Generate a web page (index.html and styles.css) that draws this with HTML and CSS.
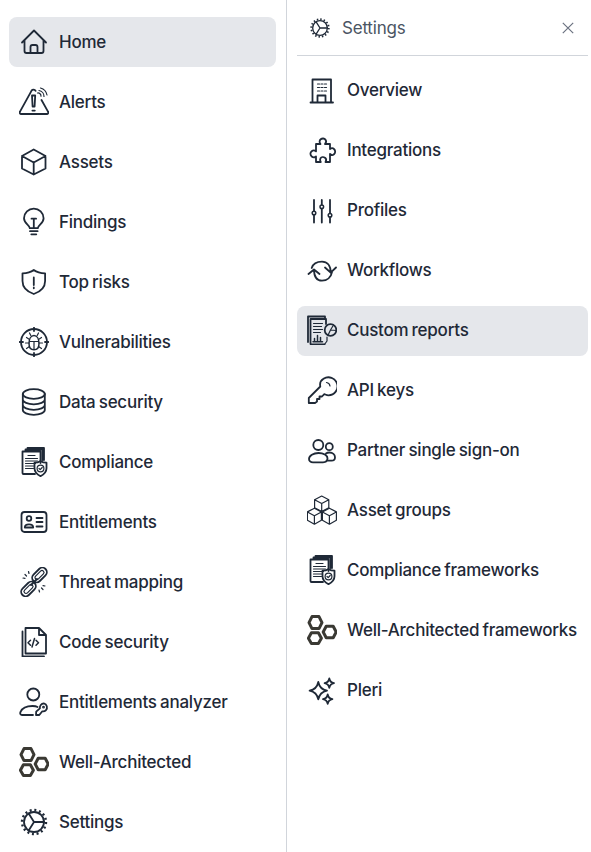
FILE: index.html
```html
<!DOCTYPE html>
<html lang="en">
<head>
<meta charset="utf-8">
<title>Navigation</title>
<link rel="stylesheet" href="styles.css">
</head>
<body>
<svg class="defs" width="0" height="0" aria-hidden="true">
  <defs>
    <symbol id="i-home" viewBox="0 0 30 30"><path d="M3 15.500 15 3.500l12 12M5.500 13.500V24a2 2 0 0 0 2 2h15a2 2 0 0 0 2-2V13.500M11.500 26v-6a2 2 0 0 1 2-2h3a2 2 0 0 1 2 2v6"/></symbol>
    <symbol id="i-alerts" viewBox="0 0 30 30"><path d="M12.600 3.600 1 24.600a1.500 1.500 0 0 0 1.300 2.400h25.400a1.500 1.500 0 0 0 1.300-2.400L22.500 13M16.600 3.800a2.300 2.300 0 0 0-4-.2M13 8.500h3.200l-.6 11h-2zM13.400 23.600h2.400"/><path class="thin" d="M20 3.500a6 6 0 0 1 5 6M21.500 1a9 9 0 0 1 6.500 7M18.500 6a3 3 0 0 1 3.500 3.200"/></symbol>
    <symbol id="i-assets" viewBox="0 0 30 30"><path d="M14.700 2.500 26.500 9v12.500l-11.800 6-11.700-6V9zM3 9l11.700 6.500L26.500 9M14.700 15.500v12"/></symbol>
    <symbol id="i-findings" viewBox="0 0 30 30"><path d="M10.800 21.200c0-3.200-5.800-4.500-5.800-10A9.800 9.800 0 0 1 14.800 1.600 9.800 9.800 0 0 1 24.600 11.200c0 5.500-5.800 6.800-5.800 10zM10.800 21.200h8M11 24.200h7.600M12.300 27.300h5M12.500 11.700h4.600M14.800 11.700v9.500"/></symbol>
    <symbol id="i-shield" viewBox="0 0 30 30"><path d="M14.800 3C11.500 5.600 8 6.300 3.500 6.300V14c0 6.500 4.500 10.700 11.300 13 6.800-2.300 11.300-6.500 11.300-13V6.300C21.600 6.300 18.100 5.600 14.800 3zM14.800 10.500v7.500M14.800 20.500v.8"/></symbol>
    <symbol id="i-vuln" viewBox="0 0 30 30"><circle cx="15" cy="15" r="13"/><path d="M15 .5v3.500M15 26v3.500M.5 15H4M26 15h3.500"/><path class="thin" d="M10.500 14.500h9M15 14.500v8M11.800 8.500 10.500 6M18.200 8.500 19.500 6M10.500 12.500 7.500 10.500M19.500 12.500l3-2M10 16H6.500M20 16h3.500M10.500 19.500l-3 2M19.500 19.500l3 2"/><path class="mid" d="M15 22.800c-3.200 0-5-2.600-5-6.300 0-4.500 2-8 5-8s5 3.500 5 8c0 3.700-1.800 6.300-5 6.300z"/></symbol>
    <symbol id="i-db" viewBox="0 0 30 30"><ellipse cx="14.800" cy="7" rx="11" ry="4.800"/><path d="M3.800 7v16c0 2.700 5 4.800 11 4.800s11-2.100 11-4.800V7M3.800 12.500c0 2.700 5 4.800 11 4.800s11-2.100 11-4.800M3.800 18c0 2.700 5 4.800 11 4.800s11-2.100 11-4.800"/></symbol>
    <symbol id="i-comp" viewBox="0 0 30 30"><path d="M16 27H4.500a1 1 0 0 1-1-1V4.500h18V16M6.500 4.500V2.500h17V13M8.500 2.500V1h16.500v12"/><path class="thin" d="M9 8.500h7M6.500 11.500h12M6.500 14h12M6.500 16.500h10M6.500 19h8M6.500 21.500h8"/><path d="M21.500 14c1.800 1.300 3.400 1.700 6 1.700v5.500c0 3.500-2.300 6-6 8-3.700-2-6-4.500-6-8v-5.500c2.600 0 4.200-.4 6-1.700z"/><circle class="thin" cx="21.500" cy="21.500" r="3.400"/><path class="thin" d="m20 21.500 1.200 1.200 2-2.200"/></symbol>
    <symbol id="i-id" viewBox="0 0 30 30"><rect x="2.500" y="5" width="25" height="20" rx="3"/><circle cx="10" cy="11.500" r="2.300"/><path d="M5.800 20.500c0-2 1.800-3.200 4.200-3.200s4.200 1.200 4.200 3.200zM17.500 11h6M17.500 15h6M17.500 19.500h6"/></symbol>
    <symbol id="i-chain" viewBox="0 0 30 30"><rect x="12" y="3.500" width="17" height="9" rx="4.500" transform="rotate(-45 20.500 8)"/><rect x="1" y="17.500" width="17" height="9" rx="4.500" transform="rotate(-45 9.500 22)"/><rect class="thin" x="15" y="6" width="11" height="4" rx="2" transform="rotate(-45 20.500 8)"/><rect class="thin" x="4" y="20" width="11" height="4" rx="2" transform="rotate(-45 9.500 22)"/><path d="M12 18l6-6"/><path class="thin" d="M6 7.500 7.500 9M9.500 4.500l.5 2M4 11l2 .4M24 22.500 22.500 21M20.500 25l-.5-2M26 19l-2-.4"/></symbol>
    <symbol id="i-code" viewBox="0 0 30 30"><path d="M6.500 1h13.500l7 7v18.500h-20.500zM20 1v7h7M3.500 4.500V29.500H25"/><path class="mid" d="M15.500 11.500 13 20M11.500 13.200 9 15.700l2.500 2.500M17 13.200l2.500 2.500-2.500 2.500"/></symbol>
    <symbol id="i-ekey" viewBox="0 0 30 30"><circle cx="14.300" cy="7.500" r="6"/><path d="M14 28H3c-1.500 0-2.200-1.500-1.500-3 1.500-3.500 6-6 12-6 2 0 4 .4 5 1"/><path d="M24.800 16.300a4.200 4.200 0 0 1 2 7c-1 1-2.300 1.200-3.500 1l-3 3.700h-3.300l.2-3.300 3.700-3.400a4.300 4.300 0 0 1 3.900-5z"/><circle class="thin" cx="24.500" cy="20.200" r=".8"/></symbol>
    <symbol id="i-hex" viewBox="0 0 30 30"><g class="hexes"><path d="M5 1.600h7l3 6-3 6H5l-3-6z"/><path d="M19.200 11.300h7l3 5.700-3 5.700h-7l-3-5.700z"/><path d="M4.400 17.800h7l3 5.500-3 5.200h-7l-3-5.200z"/></g></symbol>
    <symbol id="i-gear" viewBox="0 0 30 30"><circle cx="15" cy="15" r="10"/><circle class="teeth" cx="15" cy="15" r="12"/><path d="M15 15h10M15 15 9.700 6.600M15 15 9.700 23.400"/></symbol>
    <symbol id="i-building" viewBox="0 0 30 30"><path d="M3.500 27.500h22.500M5.500 27.500V4.500h18.500v23M10.500 27.500V20.500h8v7"/><path class="thin" d="M10.500 9h2M14 9h2M17.500 9h2M10.500 12.500h2M14 12.500h2M17.500 12.500h2M10.500 16h2M14 16h2M17.500 16h2"/></symbol>
    <symbol id="i-puzzle" viewBox="0 0 30 30"><path d="M9 9h4.500c-1.300-1.500-1.200-3.500.2-4.700 1.500-1.200 3.700-1 4.700.3 1 1.400.8 3.200-.4 4.400H23v5c1.300-1 3-1 4 0 1.600 1.500 1.500 4 0 5.300-1.200 1-2.800.9-4-.3V27h-4.500c1-1.700.7-3.400-.5-4.300-1.500-1-3.600-.8-4.500.5-.7 1.100-.6 2.500.3 3.800H9v-5.500c-1.200 1-3 1.100-4.300 0-1.700-1.500-1.700-4 0-5.300 1.300-1 3-.9 4.300.2z"/></symbol>
    <symbol id="i-sliders" viewBox="0 0 30 30"><path d="M7 5v11M7 20v7.500M14.800 5v4.500M14.800 14v13.500M23 5v13M23 22.500v5"/><circle class="mid" cx="7" cy="18" r="1.800"/><circle class="mid" cx="14.800" cy="11.800" r="1.800"/><circle class="mid" cx="23" cy="20.200" r="1.800"/></symbol>
    <symbol id="i-flow" viewBox="0 0 30 30"><path d="M4.700 13C6 9 10 6.700 15 6.700c5 0 8.700 3.500 8.700 11M18 12.500l5.700 5.200 5.300-5.200M25 17c-1 5.500-5 8.700-10 8.700-5 0-8-4-8-11.200M1.500 19 7 14.500l5.500 4.500"/></symbol>
    <symbol id="i-report" viewBox="0 0 30 30"><path d="M17.500 29.500H4.500a1 1 0 0 1-1-1V4h15.500v5M1 1.500h17V4M1 1.500V27"/><path class="thin" d="M6.500 8.500h9M6.500 11.500h8M6.500 14.500h9M6.500 17.500h7"/><path class="mid" d="M7.500 26.500v-3M10.500 26.500v-6M13.500 26.500v-4M6 26.800h9.500"/><circle cx="23.500" cy="15" r="5.800"/><path class="thin" d="M23.500 15 26.500 10M23.500 15l5.800.5M23.500 15l-2.500 5.200"/><path class="thin" d="M20 22v4l-2.500 3.500"/></symbol>
    <symbol id="i-key" viewBox="0 0 30 30"><path d="M16.500 3.800a9 9 0 1 1 5 16.500c-1.800 0-2.800-.7-4.200-1.200l-2.300 2.400h-2.500v2.500h-2.500v2.500L8 28H1.800v-5l11.500-11.500c-.8-3.500.5-6 3.200-7.700z"/><path class="thin" d="M19.500 7.500a4 4 0 0 1 3.500 3.500"/></symbol>
    <symbol id="i-partner" viewBox="0 0 30 30"><circle cx="11.300" cy="10" r="5"/><circle cx="22.300" cy="11.700" r="3.500"/><path d="M2 24c0-3.500 4.500-6 9.500-6s9 2.500 9 5.300c0 2.500-2 4-4.500 4H6c-2.500 0-4-1.500-4-3.300zM19 18.500c1-.8 2.500-1 3.500-1 3.200 0 5.500 2 5.500 4.700 0 2.500-1.800 3.500-3.500 3.500h-4"/></symbol>
    <symbol id="i-cubes" viewBox="0 0 30 30"><g class="thin"><path d="M14.700 1 21.800 4.700v8l-7.100 3.800-7.100-3.800v-8zM7.600 4.700l7.100 3.800 7.100-3.800M14.700 8.500v8"/><path d="M7.400 13.200l7 3.700v8.300l-7 4-7-4v-8.300zM.4 17l7 3.800 7-3.800M7.400 20.800v8.400"/><path d="M22.400 13.200l7 3.700v8.300l-7 4-7-4v-8.300zM15.400 17l7 3.800 7-3.800M22.400 20.800v8.400"/></g></symbol>
    <symbol id="i-sparkle" viewBox="0 0 30 30"><path d="M11.300 7c1 5 3.600 7.700 8.700 8.700-5.100 1-7.700 3.700-8.700 8.700-1-5-3.600-7.700-8.700-8.700 5.100-1 7.700-3.700 8.700-8.700zM22.300 3.500c.5 2.500 2 4.200 4.700 4.700-2.700.5-4.200 2.200-4.700 4.700-.5-2.500-2-4.200-4.700-4.700 2.700-.5 4.200-2.200 4.700-4.700zM20.700 19.500c.5 2.500 2 4.200 4.700 4.700-2.700.5-4.200 2.200-4.700 4.700-.5-2.500-2-4.200-4.700-4.700 2.700-.5 4.200-2.200 4.700-4.700z"/></symbol>
  </defs>
</svg>
<div class="app">
  <nav class="pane pane-main">
    <a class="item active"><svg class="icon"><use href="#i-home"/></svg><span>Home</span></a>
    <a class="item"><svg class="icon"><use href="#i-alerts"/></svg><span>Alerts</span></a>
    <a class="item"><svg class="icon"><use href="#i-assets"/></svg><span>Assets</span></a>
    <a class="item"><svg class="icon"><use href="#i-findings"/></svg><span>Findings</span></a>
    <a class="item"><svg class="icon"><use href="#i-shield"/></svg><span>Top risks</span></a>
    <a class="item"><svg class="icon"><use href="#i-vuln"/></svg><span>Vulnerabilities</span></a>
    <a class="item"><svg class="icon"><use href="#i-db"/></svg><span>Data security</span></a>
    <a class="item"><svg class="icon"><use href="#i-comp"/></svg><span>Compliance</span></a>
    <a class="item"><svg class="icon"><use href="#i-id"/></svg><span>Entitlements</span></a>
    <a class="item"><svg class="icon"><use href="#i-chain"/></svg><span>Threat mapping</span></a>
    <a class="item"><svg class="icon"><use href="#i-code"/></svg><span>Code security</span></a>
    <a class="item"><svg class="icon"><use href="#i-ekey"/></svg><span>Entitlements analyzer</span></a>
    <a class="item"><svg class="icon"><use href="#i-hex"/></svg><span>Well-Architected</span></a>
    <a class="item"><svg class="icon"><use href="#i-gear"/></svg><span>Settings</span></a>
  </nav>
  <nav class="pane pane-sub">
    <header class="sub-head">
      <svg class="head-icon"><use href="#i-gear"/></svg>
      <span class="head-title">Settings</span>
      <svg class="close" viewBox="0 0 12 12"><path d="M.8.8l10.400 10.400M11.200.8.8 11.200"/></svg>
    </header>
    <div class="sub-list">
      <a class="item"><svg class="icon"><use href="#i-building"/></svg><span>Overview</span></a>
      <a class="item"><svg class="icon"><use href="#i-puzzle"/></svg><span>Integrations</span></a>
      <a class="item"><svg class="icon"><use href="#i-sliders"/></svg><span>Profiles</span></a>
      <a class="item"><svg class="icon"><use href="#i-flow"/></svg><span>Workflows</span></a>
      <a class="item active"><svg class="icon"><use href="#i-report"/></svg><span>Custom reports</span></a>
      <a class="item"><svg class="icon"><use href="#i-key"/></svg><span>API keys</span></a>
      <a class="item"><svg class="icon"><use href="#i-partner"/></svg><span>Partner single sign-on</span></a>
      <a class="item"><svg class="icon"><use href="#i-cubes"/></svg><span>Asset groups</span></a>
      <a class="item"><svg class="icon"><use href="#i-comp"/></svg><span>Compliance frameworks</span></a>
      <a class="item"><svg class="icon"><use href="#i-hex"/></svg><span>Well-Architected frameworks</span></a>
      <a class="item"><svg class="icon"><use href="#i-sparkle"/></svg><span>Pleri</span></a>
    </div>
  </nav>
</div>
</body>
</html>
```

FILE: styles.css
```css
* { box-sizing: border-box; }
html, body { margin: 0; padding: 0; height: 100%; overflow: hidden; background: #fff; }
body { font-family: Inter, "Liberation Sans", sans-serif; color: #1f2937; }
.defs { position: absolute; }
.app { display: flex; height: 852px; }
.pane-main {
  width: 287px;
  padding: 17px 10px 0 9px;
  border-right: 1px solid #d1d5db;
  display: flex;
  flex-direction: column;
  gap: 10px;
}
.pane-sub { width: 304px; padding: 0 3px 0 10px; }
.item {
  display: flex;
  align-items: center;
  gap: 10px;
  height: 50px;
  padding-left: 10px;
  border-radius: 8px;
  font-size: 17px;
  font-weight: 450;
  line-height: 24px;
  letter-spacing: -0.25px;
  word-spacing: -1px;
  white-space: nowrap;
}
.item.active { background: #e5e7eb; }
.sub-list .item { padding-bottom: 2px; }
.icon { width: 30px; height: 30px; flex: none; }
symbol, .icon, .head-icon { fill: none; stroke: #1f2937; stroke-width: 1.8; stroke-linecap: round; stroke-linejoin: round; }
.thin { stroke-width: 1.2; }
.mid { stroke-width: 1.5; }
.teeth { stroke-width: 2.4; stroke-dasharray: 2 2.71; stroke-linecap: butt; }
.hexes { stroke: #3a3933; stroke-width: 3; }
.sub-head {
  display: flex;
  align-items: center;
  height: 56px;
  border-bottom: 1px solid #d1d5db;
  padding: 0 14px 0 12px;
}
.head-icon { width: 22px; height: 22px; flex: none; }
.head-title { margin-left: 11px; font-size: 17px; color: #4b5563; letter-spacing: -0.2px; }
.close { width: 12px; height: 12px; margin-left: auto; fill: none; stroke: #6b7280; stroke-width: 1.2; }
.sub-list { display: flex; flex-direction: column; gap: 10px; padding-top: 10px; }
```
